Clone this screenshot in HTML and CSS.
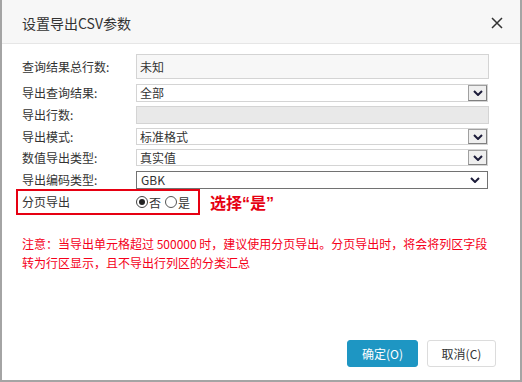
FILE: index.html
```html
<html>
<head>
<title>设置导出CSV参数</title>
<meta http-equiv="Content-Type" content="text/html; charset=UTF-8" />
<link rel="stylesheet" href="styles.css">
</head>
<body>

<div class="dialog">
  <div class="dialog-header">
    <span class="dialog-title">设置导出CSV参数</span>
    <svg class="dialog-close" width="12" height="12" viewBox="0 0 12 12">
      <path d="M1 1 L11 11 M11 1 L1 11" stroke="#333" stroke-width="1.5" fill="none"/>
    </svg>
  </div>

  <div class="dialog-body">
    <div class="form-row row-first">
      <span class="form-label">查询结果总行数:</span>
      <div class="field field-readonly">未知</div>
    </div>
    <div class="form-row row-gap5">
      <span class="form-label">导出查询结果:</span>
      <div class="field field-select">全部
        <span class="select-btn"><svg width="10" height="6" viewBox="0 0 10 6"><path d="M1 1 L5 5 L9 1" stroke="#1c1c3a" stroke-width="2" fill="none"/></svg></span>
      </div>
    </div>
    <div class="form-row">
      <span class="form-label">导出行数:</span>
      <div class="field field-disabled"></div>
    </div>
    <div class="form-row row-short">
      <span class="form-label">导出模式:</span>
      <div class="field field-select">标准格式
        <span class="select-btn"><svg width="10" height="6" viewBox="0 0 10 6"><path d="M1 1 L5 5 L9 1" stroke="#1c1c3a" stroke-width="2" fill="none"/></svg></span>
      </div>
    </div>
    <div class="form-row row-short">
      <span class="form-label">数值导出类型:</span>
      <div class="field field-select">真实值
        <span class="select-btn"><svg width="10" height="6" viewBox="0 0 10 6"><path d="M1 1 L5 5 L9 1" stroke="#1c1c3a" stroke-width="2" fill="none"/></svg></span>
      </div>
    </div>
    <div class="form-row row-gap5">
      <span class="form-label">导出编码类型:</span>
      <div class="field field-select field-focus">GBK
        <span class="select-arrow"><svg width="10" height="6" viewBox="0 0 10 6"><path d="M1 1 L5 5 L9 1" stroke="#1c1c3a" stroke-width="2" fill="none"/></svg></span>
      </div>
    </div>

    <div class="page-row">
      <div class="highlight-box">
        <span class="form-label">分页导出</span>
        <span class="radio radio-on"></span><span class="radio-text">否</span>
        <span class="radio radio-second"></span><span class="radio-text">是</span>
      </div>
      <span class="annotation">选择“是”</span>
    </div>

    <p class="note">注意：当导出单元格超过 500000 时，建议使用分页导出。分页导出时，将会将列区字段转为行区显示，且不导出行列区的分类汇总</p>
  </div>

  <div class="dialog-footer">
    <button class="btn btn-primary">确定(O)</button>
    <button class="btn btn-default">取消(C)</button>
  </div>
</div>

</body>
</html>
```

FILE: styles.css
```css
body{
   margin:0;
   background:#fff;
   font-family:"Noto Sans CJK SC", sans-serif;
   -webkit-font-smoothing: antialiased;
}
.dialog{
   width:522px;
   height:382px;
   box-sizing:border-box;
   border:2px solid #a4a4a4;
   border-top:none;
   display:flex;
   flex-direction:column;
   background:#fff;
   overflow:hidden;
}
.dialog-header{
   height:43px;
   flex-shrink:0;
   background:#f7f7f7;
   border-bottom:1px solid #e6e6e6;
   display:flex;
   align-items:center;
   justify-content:space-between;
   padding:0 17px 0 20px;
}
.dialog-title{
   font-size:14px;
   color:#333;
   margin-top:2px;
}
.dialog-close{
   margin-top:2px;
}
.dialog-body{
   flex:1;
   padding:10px 0 0 20px;
   font-size:12px;
   color:#333;
}
.form-row{
   display:flex;
   align-items:center;
   height:18px;
   margin-top:4px;
}
.row-first{
   height:25px;
   margin-top:0;
}
.row-gap5{
   margin-top:5px;
}
.row-short{
   height:17px;
}
.form-label{
   width:114px;
   flex-shrink:0;
   line-height:18px;
}
.field{
   box-sizing:border-box;
   height:100%;
   width:353px;
   border:1px solid #d4d4d4;
   display:flex;
   align-items:center;
   padding-left:3px;
   line-height:16px;
}
.field-readonly{
   background:#f7f7f7;
}
.field-disabled{
   background:#e9e9e9;
}
.field-select{
   width:352px;
   justify-content:space-between;
   background:#fff;
   padding-right:0;
}
.field-focus{
   border-color:#727272;
   padding-left:4px;
}
.select-btn{
   box-sizing:border-box;
   width:19px;
   height:100%;
   background:#efefef;
   border:1px solid #808080;
   border-top-color:#a0a0a0;
   border-left-color:#a0a0a0;
   display:flex;
   align-items:center;
   justify-content:center;
}
.select-arrow{
   width:19px;
   display:flex;
   justify-content:center;
   padding-right:3px;
}
.page-row{
   display:flex;
   align-items:center;
   margin-left:-6px;
}
.highlight-box{
   box-sizing:border-box;
   width:184px;
   height:26px;
   border:2px solid #e60012;
   display:flex;
   align-items:center;
   padding-left:4px;
}
.radio{
   box-sizing:border-box;
   width:12px;
   height:12px;
   border:1px solid #444;
   border-radius:50%;
   background:#fff;
   display:inline-flex;
   align-items:center;
   justify-content:center;
}
.radio-on::after{
   content:"";
   width:6px;
   height:6px;
   border-radius:50%;
   background:#222;
}
.radio-second{
   margin-left:4px;
   border-color:#555;
}
.radio-text{
   margin-left:1px;
}
.annotation{
   margin-left:10px;
   font-family:"Liberation Sans", "Noto Sans CJK SC", sans-serif;
   font-size:16px;
   font-weight:bold;
   color:#e60012;
}
.note{
   margin:19px 28px 0 0;
   color:#f5001a;
   font-size:12px;
   line-height:19px;
}
.dialog-footer{
   flex-shrink:0;
   display:flex;
   justify-content:flex-end;
   gap:9px;
   padding:0 24px 13px 0;
}
.btn{
   height:27px;
   border-radius:3px;
   font-family:"Noto Sans CJK SC", sans-serif;
   font-size:12px;
   padding:0;
   cursor:pointer;
}
.btn-primary{
   width:71px;
   background:#1e96c3;
   border:1px solid #1e96c3;
   color:#fff;
}
.btn-default{
   width:69px;
   background:#fff;
   border:1px solid #dcdcdc;
   color:#333;
}
```
